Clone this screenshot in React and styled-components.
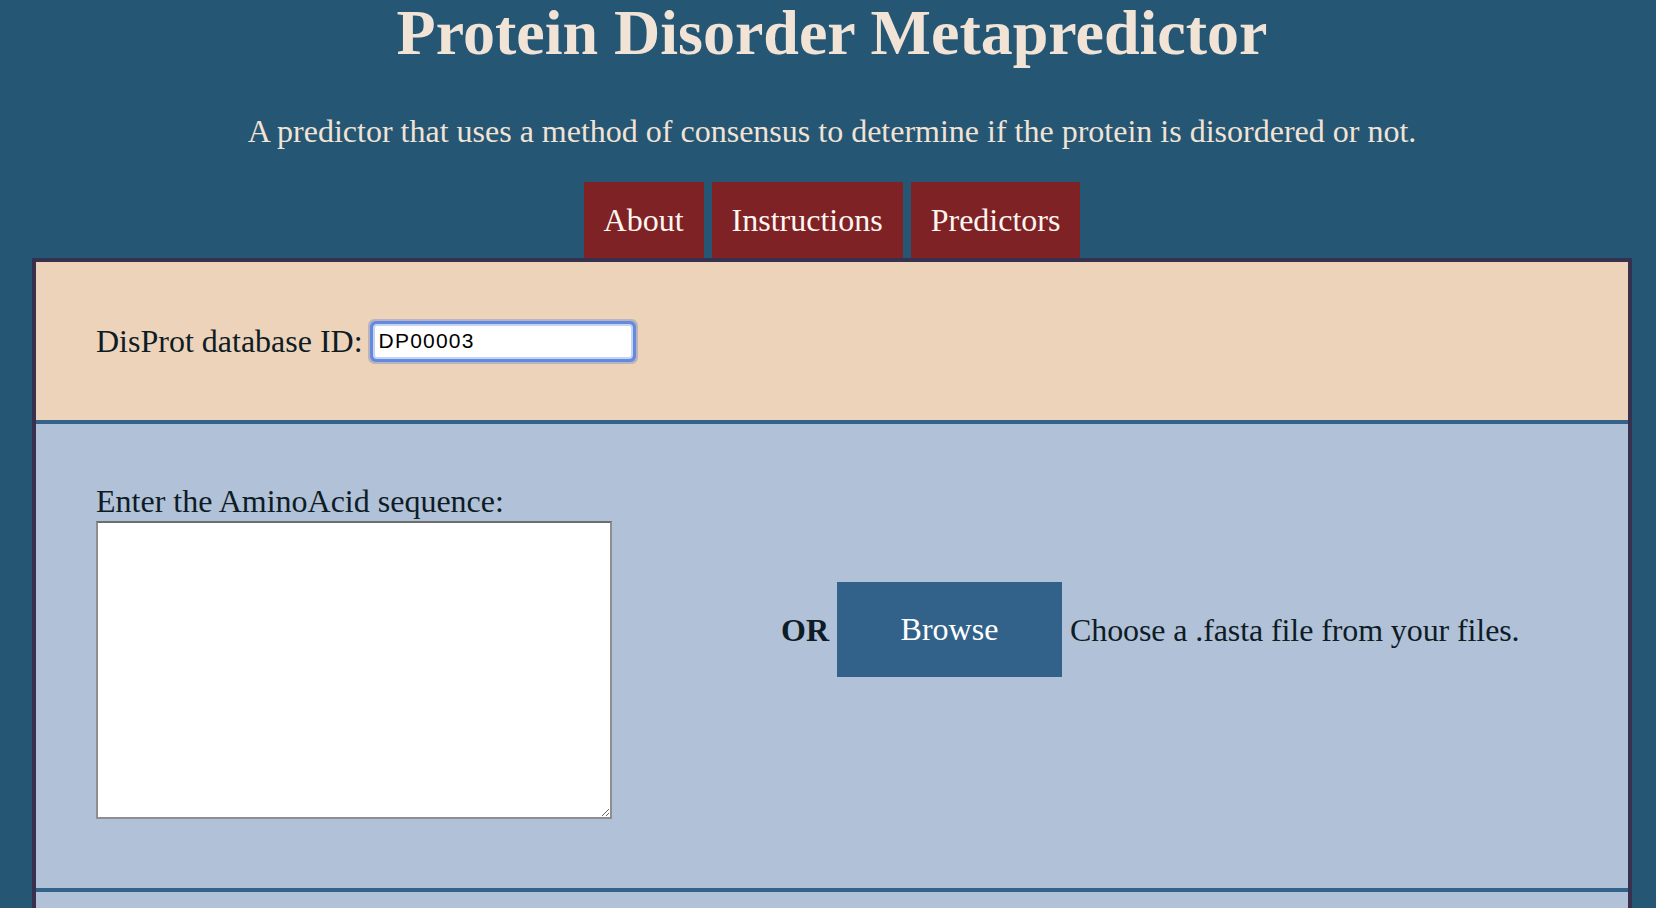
import styled, { createGlobalStyle } from 'styled-components';

const GlobalStyle = createGlobalStyle`
  html, body {
    margin: 0;
    padding: 0;
    overflow: hidden;
    background-color: #255674;
  }
  body {
    font-family: "Liberation Serif", "Times New Roman", serif;
  }
`

const tabs = ['About', 'Instructions', 'Predictors']

const App = () => {
  return (
    <Page>
      <GlobalStyle />
      <Header>
        <Title>Protein Disorder Metapredictor</Title>
        <Subtitle>A predictor that uses a method of consensus to determine if the protein is disordered or not.</Subtitle>
        <TabBar>
          {tabs.map(t => (
            <Tab key={t}>{t}</Tab>
          ))}
        </TabBar>
      </Header>
      <Panel>
        <IdSection>
          <Label htmlFor='disprot'>DisProt database ID:</Label>
          <IdInput id='disprot' defaultValue='DP00003' />
        </IdSection>
        <SequenceSection>
          <SequenceBox>
            <BlockLabel htmlFor='sequence'>Enter the AminoAcid sequence:</BlockLabel>
            <SequenceInput id='sequence' />
          </SequenceBox>
          <FileRow>
            <Or>OR</Or>
            <BrowseButton>Browse</BrowseButton>
            <Hint>Choose a .fasta file from your files.</Hint>
          </FileRow>
        </SequenceSection>
        <NextSection />
      </Panel>
    </Page>
  )
}

export default App

const Page = styled.div`
  width: 1664px;
  padding: 0 32px;
  box-sizing: border-box;
`

const Header = styled.header`
  display: flex;
  flex-direction: column;
  align-items: center;
  color: #f1e3d5;
`

const Title = styled.h1`
  margin: 0;
  padding-top: 1px;
  font-size: 64px;
  line-height: 64px;
  font-weight: 700;
`

const Subtitle = styled.p`
  margin: 50px 0 0;
  font-size: 32px;
  line-height: 32px;
`

const TabBar = styled.nav`
  display: flex;
  gap: 8px;
  margin-top: 35px;
`

const Tab = styled.div`
  height: 76px;
  padding: 0 20px;
  background-color: #7e2226;
  color: #fff6f0;
  font-size: 32px;
  line-height: 76px;
  cursor: pointer;
`

const Panel = styled.main`
  border: 4px solid #37304f;
  border-bottom: none;
`

const IdSection = styled.section`
  height: 162px;
  box-sizing: border-box;
  padding: 0 60px;
  display: flex;
  align-items: center;
  gap: 12px;
  background-color: #edd3ba;
  border-bottom: 4px solid #33628b;
`

const Label = styled.label`
  font-size: 32px;
  line-height: 32px;
  color: #0e1c26;
`

const BlockLabel = styled(Label)`
  display: block;
`

const IdInput = styled.input`
  width: 256px;
  height: 31px;
  box-sizing: border-box;
  padding: 0 4px;
  border: none;
  outline: none;
  background-color: #ffffff;
  font-family: "Liberation Sans", Arial, sans-serif;
  font-size: 21px;
  letter-spacing: 1.2px;
  color: #000000;
  box-shadow: 0 0 0 2px #c5d4f2, 0 0 0 5px #6389e1, 0 0 0 7px rgba(120, 140, 190, 0.45);
  border-radius: 2px;
`

const SequenceSection = styled.section`
  display: flex;
  align-items: flex-start;
  padding: 61px 60px 0;
  height: 468px;
  box-sizing: border-box;
  background-color: #b1c1d7;
  border-bottom: 4px solid #33628b;
`

const SequenceBox = styled.div`
  display: flex;
  flex-direction: column;
  gap: 4px;
`

const SequenceInput = styled.textarea`
  width: 516px;
  height: 298px;
  box-sizing: border-box;
  margin: 0;
  border: 2px solid #8e8e8e;
  border-top-color: #6e6e6e;
  background-color: #ffffff;
  resize: both;
`

const FileRow = styled.div`
  display: flex;
  align-items: center;
  margin: 97px 0 0 169px;
`

const Or = styled.span`
  font-size: 32px;
  line-height: 32px;
  font-weight: 700;
  color: #0e1c26;
`

const BrowseButton = styled.button`
  width: 225px;
  height: 95px;
  margin-left: 8px;
  border: none;
  background-color: #32628a;
  color: #ffffff;
  font-family: inherit;
  font-size: 32px;
  cursor: pointer;
`

const Hint = styled.span`
  margin-left: 8px;
  font-size: 32px;
  line-height: 32px;
  letter-spacing: -0.1px;
  color: #0e1c26;
`

const NextSection = styled.section`
  height: 200px;
  background-color: #b1c1d7;
`
